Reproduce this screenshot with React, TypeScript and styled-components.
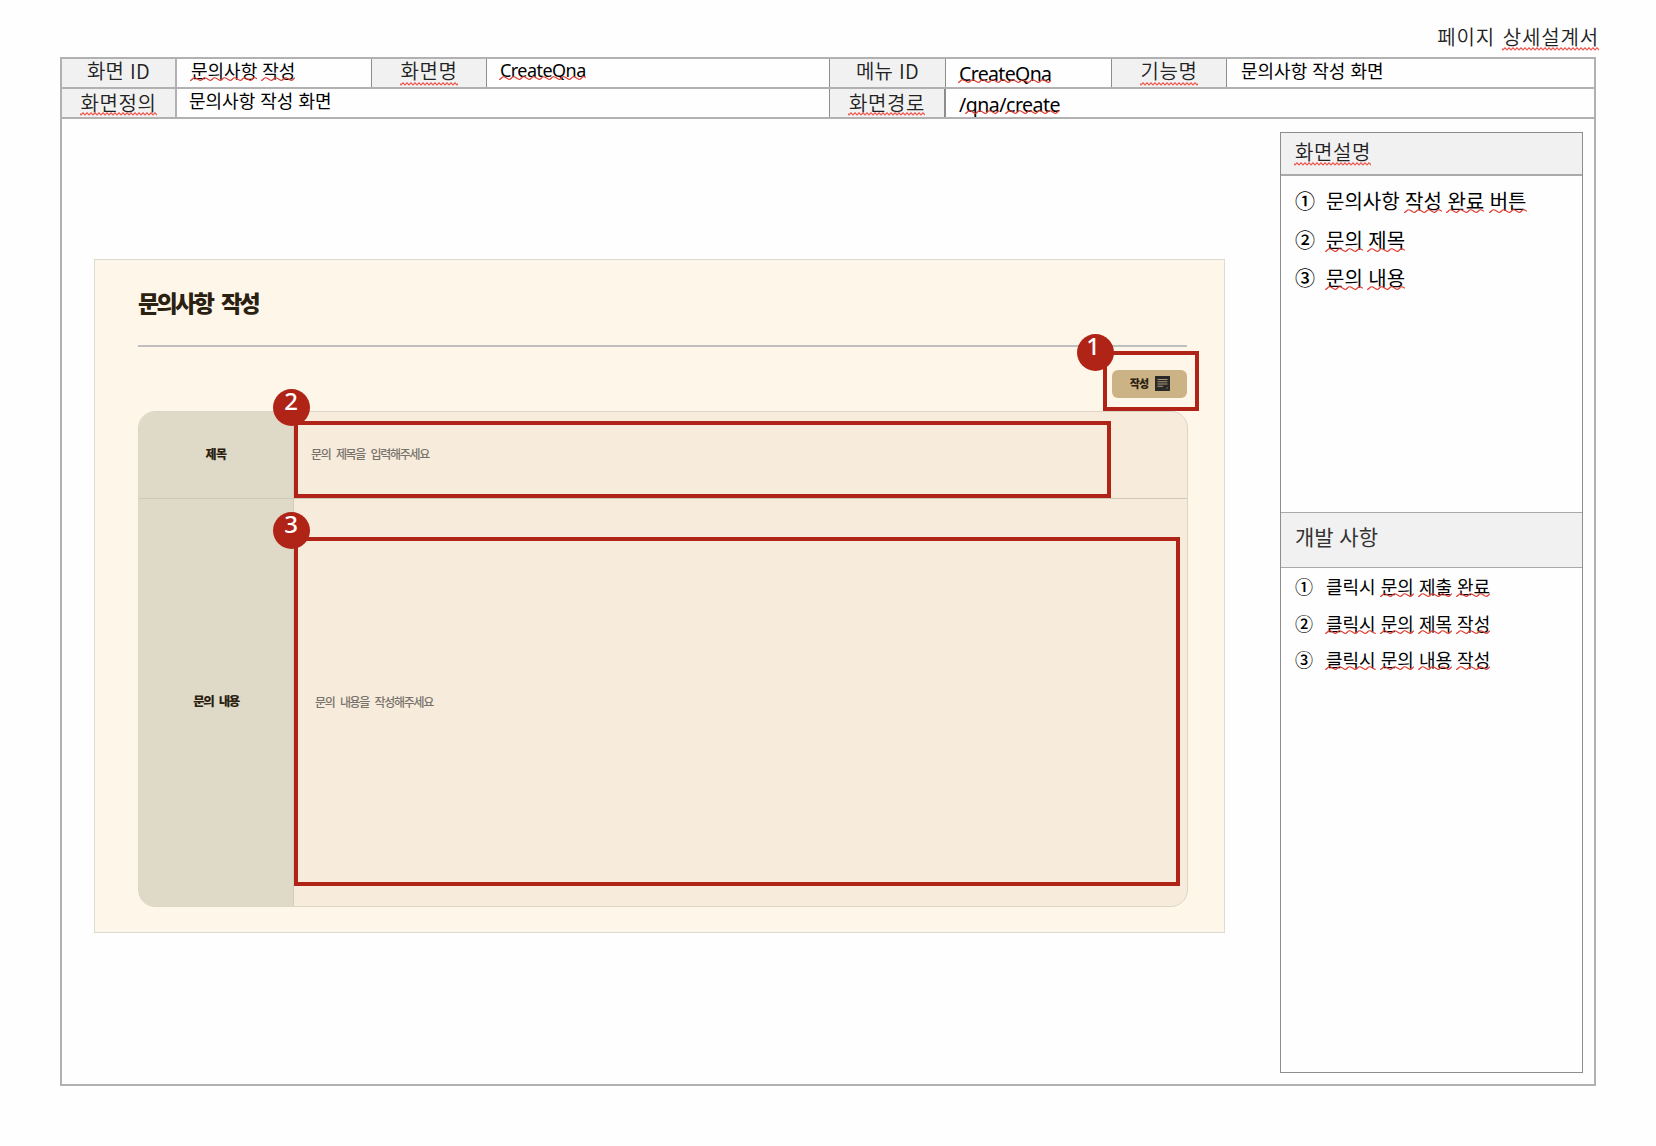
import React, { useId } from 'react';
import styled, { createGlobalStyle } from 'styled-components';

const GlobalStyle = createGlobalStyle`
  * { box-sizing: border-box; }
  body {
    margin: 0;
    background: #fefefe;
    color: #000;
    font-family: 'Noto Sans CJK KR', sans-serif;
  }
`;

const LINE = '#b1b1b1';
const LINE_DARK = '#8d8d8d';
const RED = '#b02418';

const Page = styled.div`
  width: 1656px;
  height: 1146px;
  padding: 27px 60px 0;
  overflow: hidden;
`;

const Text = styled.span<{ $size: number; $ls?: number; $ws?: number; $latin?: boolean; $w?: number; $color?: string }>`
  display: block;
  white-space: nowrap;
  line-height: 1;
  font-size: ${p => p.$size}px;
  font-weight: ${p => p.$w ?? 400};
  letter-spacing: ${p => p.$ls ?? 0}px;
  word-spacing: ${p => p.$ws ?? 0}px;
  color: ${p => p.$color ?? 'inherit'};
  font-family: ${p => (p.$latin ? "'Noto Sans', sans-serif" : "'Noto Sans CJK KR', sans-serif")};
`;

const DocTitle = styled.header`
  display: flex;
  justify-content: flex-end;
  height: 30px;
  margin-right: -3px;
  color: #222;
`;

const Sheet = styled.main`
  width: 1536px;
  height: 1029px;
  border: 2px solid ${LINE};
`;

const MetaRow = styled.div`
  display: flex;
  height: 30px;
  border-bottom: 2px solid ${LINE};
`;

const LabelCell = styled.div<{ $width: number; $top: number; $line?: number; $soft?: boolean }>`
  display: flex;
  justify-content: center;
  width: ${p => p.$width}px;
  padding-top: ${p => p.$top}px;
  background: #f1f1f1;
  color: #222;
  border-right: ${p => p.$line ?? 1}px solid ${p => (p.$soft ? LINE : LINE_DARK)};
`;

const ValueCell = styled.div<{ $width?: number; $top: number; $left: number }>`
  flex: ${p => (p.$width ? 'none' : '1')};
  width: ${p => (p.$width ? `${p.$width}px` : 'auto')};
  padding: ${p => p.$top}px 0 0 ${p => p.$left}px;
  border-right: ${p => (p.$width ? 1 : 0)}px solid ${LINE_DARK};
`;

const Body = styled.div`
  display: flex;
  align-items: flex-start;
`;

const SpellWord = styled.span`
  position: relative;
  display: inline-block;
`;

const Squiggle = styled.svg<{ $y: number }>`
  position: absolute;
  left: -1px;
  top: ${p => p.$y}px;
  width: calc(100% + 1px);
  height: 5px;
`;

function Spell({ children, y, fine }: { children: React.ReactNode; y: number; fine?: boolean }) {
  const id = useId();
  return (
    <SpellWord>
      {children}
      <Squiggle $y={y} aria-hidden>
        <defs>
          {fine ? (
            <pattern id={id} width="4" height="5" patternUnits="userSpaceOnUse">
              <path d="M-1 .8 L1 3 L3 .8 L5 3" fill="none" stroke="#ec5a50" strokeWidth="1.15" />
            </pattern>
          ) : (
            <pattern id={id} width="10" height="5" patternUnits="userSpaceOnUse">
              <path d="M0 3.5 Q1.2 3.5 2.5 2 T5 .8 T7.5 2 T10 3.5" fill="none" stroke="#e03a2e" strokeWidth="1.15" />
            </pattern>
          )}
        </defs>
        <rect width="100%" height="5" fill={`url(#${id})`} />
      </Squiggle>
    </SpellWord>
  );
}

const Shot = styled.section`
  position: relative;
  flex: none;
  width: 1131px;
  height: 674px;
  margin: 140px 0 0 32px;
  padding: 31px 37px 0 43px;
  background: #fef7e9;
  border: 1px solid #dddacf;
`;

const ShotHeading = styled.div`
  height: 56px;
  border-bottom: 2px solid #c1bfbd;
`;

const ButtonRow = styled.div`
  display: flex;
  justify-content: flex-end;
  height: 64px;
  padding-top: 23px;
`;

const WriteButton = styled.button`
  display: flex;
  align-items: center;
  justify-content: center;
  gap: 7px;
  width: 75px;
  height: 28px;
  padding: 0 0 1px 1px;
  border: 0;
  border-radius: 6px;
  background: #cbb386;
  color: #2b2111;
`;

const Form = styled.div`
  overflow: hidden;
  width: 1050px;
  height: 496px;
  border: 1px solid #ddd5c6;
  border-radius: 17px;
  background: #f7ebdc;
`;

const FormRow = styled.div<{ $height: number }>`
  display: flex;
  height: ${p => p.$height}px;
  & + & { border-top: 1px solid #d0c8b9; }
`;

const FormLabel = styled.div`
  display: flex;
  align-items: center;
  justify-content: center;
  width: 155px;
  padding-bottom: 3px;
  background: #dfd9c7;
  border-right: 1px solid #d3cbba;
`;

const Field = styled.div<{ $left: number }>`
  display: flex;
  align-items: center;
  padding: 0 0 3px ${p => p.$left}px;
`;

type Box = { x: number; y: number; w: number; h: number };

const Highlight = styled.div<{ $b: Box }>`
  position: absolute;
  left: ${p => p.$b.x}px;
  top: ${p => p.$b.y}px;
  width: ${p => p.$b.w}px;
  height: ${p => p.$b.h}px;
  border: 4px solid ${RED};
`;

const Marker = styled.div<{ $x: number; $y: number; $shift?: number }>`
  position: absolute;
  left: ${p => p.$x}px;
  top: ${p => p.$y}px;
  width: 37px;
  height: 37px;
  padding: 0 ${p => p.$shift ?? 1}px 0 0;
  border-radius: 50%;
  background: ${RED};
  color: #fff;
  text-align: center;
  font: 500 24px/24px 'Noto Sans', sans-serif;
`;

const Side = styled.aside`
  flex: none;
  width: 303px;
  height: 941px;
  margin: 13px 0 0 55px;
  border: 1px solid ${LINE_DARK};
`;

const SideHead = styled.div<{ $height: number; $top: number; $second?: boolean }>`
  height: ${p => p.$height}px;
  padding: ${p => p.$top}px 0 0 14px;
  background: #f1f1f1;
  color: #222;
  border-bottom: ${p => (p.$second ? 1 : 2)}px solid #aaa;
  border-top: ${p => (p.$second ? 1 : 0)}px solid #aaa;
`;

const SideList = styled.ol<{ $height: number; $top: number; $pitch: number }>`
  height: ${p => p.$height}px;
  margin: 0;
  padding: ${p => p.$top}px 0 0 14px;
  list-style: none;
  li { display: flex; height: ${p => p.$pitch}px; }
  li > :first-child { width: 31px; font-weight: 500; }
`;

const NoteIcon = () => (
  <svg width="15" height="15" viewBox="0 0 15 15">
    <path d="M0 0h15v15H0z" fill="#2b2a28" />
    <path d="M2.5 3.5h10M2.5 5.8h10M2.5 8h10M2.5 10.3h5.5" stroke="#a89677" strokeWidth="1.1" />
    <path d="M11 12.5h1.5V11z" fill="#a89677" />
  </svg>
);

export default function App() {
  return (
    <>
      <GlobalStyle />
      <Page>
        <DocTitle>
          <Text $size={20} $ls={0.85} $ws={2.5} $w={350}>페이지 <Spell y={20} fine>상세설계서</Spell></Text>
        </DocTitle>
        <Sheet>
          <MetaRow>
            <LabelCell $width={115} $top={2} $line={2} $soft><Text $size={20} $ls={0.3} $ws={1} $w={350}>화면 ID</Text></LabelCell>
            <ValueCell $width={195} $top={2} $left={14}>
              <Text $size={18} $ws={1}><Spell y={16}>문의사항</Spell> <Spell y={16}>작성</Spell></Text>
            </ValueCell>
            <LabelCell $width={115} $top={2}><Text $size={20} $ls={0.6} $w={350}><Spell y={21} fine>화면명</Spell></Text></LabelCell>
            <ValueCell $width={343} $top={2} $left={13}>
              <Text $size={18} $ls={-0.55} $latin><Spell y={15}>CreateQna</Spell></Text>
            </ValueCell>
            <LabelCell $width={116} $top={2}><Text $size={20} $ls={0.3} $ws={1} $w={350}>메뉴 ID</Text></LabelCell>
            <ValueCell $width={166} $top={5} $left={13}>
              <Text $size={19.5} $ls={-0.65} $latin><Spell y={15}>CreateQna</Spell></Text>
            </ValueCell>
            <LabelCell $width={115} $top={2}><Text $size={20} $ls={0.6} $w={350}><Spell y={21} fine>기능명</Spell></Text></LabelCell>
            <ValueCell $top={2} $left={14}><Text $size={18} $ws={1}>문의사항 작성 화면</Text></ValueCell>
          </MetaRow>
          <MetaRow>
            <LabelCell $width={115} $top={4} $line={2} $soft><Text $size={20} $ls={0.6} $w={350}><Spell y={19} fine>화면정의</Spell></Text></LabelCell>
            <ValueCell $width={653} $top={2} $left={12}><Text $size={18} $ws={1}>문의사항 작성 화면</Text></ValueCell>
            <LabelCell $width={116} $top={4} $line={2}><Text $size={20} $ls={0.6} $w={350}><Spell y={19} fine>화면경로</Spell></Text></LabelCell>
            <ValueCell $top={6} $left={13}>
              <Text $size={19.5} $ls={-0.5} $latin>/<Spell y={15}>qna</Spell>/<Spell y={15}>create</Spell></Text>
            </ValueCell>
          </MetaRow>
          <Body>
            <Shot>
              <ShotHeading><Text $size={23} $ls={-2.6} $ws={6} $w={800} $color="#2b2111">문의사항 작성</Text></ShotHeading>
              <ButtonRow>
                <WriteButton><Text $size={11} $ls={-0.8} $w={800}>작성</Text><NoteIcon /></WriteButton>
              </ButtonRow>
              <Form>
                <FormRow $height={86}>
                  <FormLabel><Text $size={12} $ls={-0.6} $w={800} $color="#2b2111">제목</Text></FormLabel>
                  <Field $left={17}><Text $size={12} $ls={-1.3} $ws={4} $w={500} $color="#77736b">문의 제목을 입력해주세요</Text></Field>
                </FormRow>
                <FormRow $height={409}>
                  <FormLabel><Text $size={12.5} $ls={-1.5} $ws={4} $w={800} $color="#2b2111">문의 내용</Text></FormLabel>
                  <Field $left={21}><Text $size={12} $ls={-1.3} $ws={4} $w={500} $color="#77736b">문의 내용을 작성해주세요</Text></Field>
                </FormRow>
              </Form>
              <Highlight $b={{ x: 1008, y: 91, w: 96, h: 60 }} />
              <Highlight $b={{ x: 199, y: 161, w: 817, h: 77 }} />
              <Highlight $b={{ x: 199, y: 277, w: 886, h: 349 }} />
              <Marker $x={982} $y={74} $shift={5}>1</Marker>
              <Marker $x={178} $y={129}>2</Marker>
              <Marker $x={178} $y={252}>3</Marker>
            </Shot>
            <Side>
              <SideHead $height={43} $top={9}><Text $size={20} $ls={0.6} $w={350}><Spell y={20} fine>화면설명</Spell></Text></SideHead>
              <SideList $height={336} $top={15} $pitch={38.5}>
                <li><Text $size={20}>①</Text><Text $size={20} $ws={1}>문의사항 <Spell y={18}>작성</Spell> <Spell y={18}>완료</Spell> <Spell y={18}>버튼</Spell></Text></li>
                <li><Text $size={20}>②</Text><Text $size={20} $ws={1}><Spell y={18}>문의</Spell> <Spell y={18}>제목</Spell></Text></li>
                <li><Text $size={20}>③</Text><Text $size={20} $ws={1}><Spell y={18}>문의</Spell> <Spell y={18}>내용</Spell></Text></li>
              </SideList>
              <SideHead $height={56} $top={13} $second><Text $size={21} $ws={1} $color="#333">개발 사항</Text></SideHead>
              <SideList $height={500} $top={9} $pitch={36.5}>
                <li><Text $size={18}>①</Text><Text $size={18} $ws={1}>클릭시 <Spell y={16}>문의</Spell> <Spell y={16}>제출</Spell> <Spell y={16}>완료</Spell></Text></li>
                <li><Text $size={18}>②</Text><Text $size={18} $ws={1}><Spell y={16}>클릭시</Spell> <Spell y={16}>문의</Spell> <Spell y={16}>제목</Spell> <Spell y={16}>작성</Spell></Text></li>
                <li><Text $size={18}>③</Text><Text $size={18} $ws={1}><Spell y={16}>클릭시</Spell> <Spell y={16}>문의</Spell> <Spell y={16}>내용</Spell> <Spell y={16}>작성</Spell></Text></li>
              </SideList>
            </Side>
          </Body>
        </Sheet>
      </Page>
    </>
  );
}
